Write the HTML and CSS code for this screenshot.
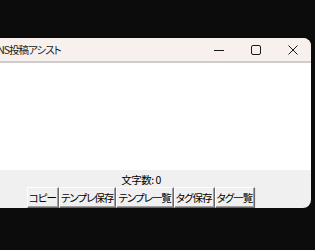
FILE: index.html
```html
<!DOCTYPE html>
<html lang="ja">
<head>
    <meta charset="UTF-8">
    <meta name="viewport" content="width=device-width, initial-scale=1.0">
    <title>SNS投稿アシスト</title>
    <link rel="stylesheet" href="styles.css">
</head>
<body>
    <div class="window">
        <div class="titlebar">
            <span class="title">SNS投稿アシスト</span>
            <div class="controls">
                <span class="ctrl">
                    <svg width="10" height="10" viewBox="0 0 10 10"><path d="M0 5.5h10" stroke="#1a1a1a" stroke-width="1"/></svg>
                </span>
                <span class="ctrl">
                    <svg width="10" height="10" viewBox="0 0 10 10"><rect x="0.5" y="0.5" width="9" height="9" rx="1.5" fill="none" stroke="#1a1a1a" stroke-width="1"/></svg>
                </span>
                <span class="ctrl">
                    <svg width="10" height="10" viewBox="0 0 10 10"><path d="M0.5 0.5l9 9M9.5 0.5l-9 9" stroke="#1a1a1a" stroke-width="1"/></svg>
                </span>
            </div>
        </div>
        <div class="editor"></div>
        <div class="footer">
            <div class="count">文字数: 0</div>
            <div class="buttons">
                <button class="tk-btn">コピー</button>
                <button class="tk-btn">テンプレ保存</button>
                <button class="tk-btn">テンプレ一覧</button>
                <button class="tk-btn">タグ保存</button>
                <button class="tk-btn">タグ一覧</button>
            </div>
        </div>
    </div>
</body>
</html>
```
FILE: styles.css
```css
* {
    margin: 0;
    padding: 0;
    box-sizing: border-box;
}

body {
    width: 315px;
    height: 250px;
    overflow: hidden;
    background: #0c0c0c;
    font-family: "Noto Sans CJK JP", "Noto Sans", sans-serif;
}

.window {
    width: 340px;
    margin-top: 38px;
    margin-left: -29px;
    border-radius: 8px;
    overflow: hidden;
    background: #f0f0f0;
}

.titlebar {
    height: 25px;
    display: flex;
    align-items: center;
    background: #f7f0ec;
    border-bottom: 2px solid #cdcdcd;
}

.title {
    margin-left: 21px;
    font-size: 10.5px;
    letter-spacing: -1px;
    color: #1a1a1a;
    font-feature-settings: "palt";
}

.controls {
    margin-left: auto;
    display: flex;
}

.ctrl {
    width: 37px;
    height: 23px;
    display: flex;
    align-items: center;
    justify-content: center;
}

.editor {
    height: 107px;
    background: #ffffff;
}

.count {
    height: 17px;
    line-height: 19px;
    text-align: center;
    font-size: 10.5px;
    letter-spacing: -0.5px;
    color: #000;
    font-feature-settings: "palt";
}

.buttons {
    display: flex;
    justify-content: center;
}

.tk-btn {
    height: 21px;
    padding: 0 2px 0 1px;
    font-family: inherit;
    font-size: 10.5px;
    letter-spacing: -1px;
    font-feature-settings: "palt";
    color: #000;
    background: #f0f0f0;
    border: 1px solid;
    border-color: #ffffff #696969 #696969 #ffffff;
    box-shadow: inset -1px -1px 0 #a0a0a0, 1px 1px 0 #e3e3e3;
}
```
